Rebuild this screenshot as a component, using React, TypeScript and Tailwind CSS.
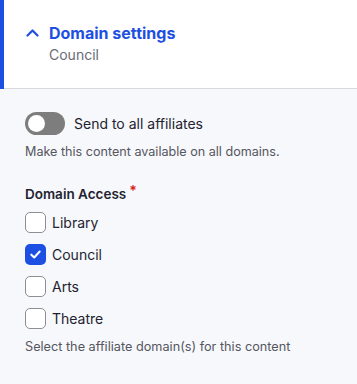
import React, { useState } from "react";

const domains = ["Library", "Council", "Arts", "Theatre"];

export default function App() {
  const [checked, setChecked] = useState<string[]>(["Council"]);
  const [sendAll, setSendAll] = useState(false);

  const toggle = (d: string) =>
    setChecked((c) => (c.includes(d) ? c.filter((x) => x !== d) : [...c, d]));

  return (
    <div className="w-[357px] h-[384px] bg-[#f7f8fb] font-['Inter',sans-serif] text-[#222330] antialiased overflow-hidden">
      {/* Details summary */}
      <div className="h-[89px] bg-white border-l-4 border-[#1d50e2] flex">
        <div className="flex-1 border-b border-[#d8d9de] pl-[22px] pt-[22px] flex gap-[10px]">
          <svg className="mt-[6px] w-[13px] h-[9px] shrink-0" viewBox="0 0 13 9" fill="none">
            <path d="M1.5 7.5 L6.5 2.5 L11.5 7.5" stroke="#1d50e2" strokeWidth="2.2" strokeLinecap="round" strokeLinejoin="round" />
          </svg>
          <div>
            <div className="text-[16px] leading-[22px] font-bold text-[#1d50e2]">Domain settings</div>
            <div className="text-[14px] leading-[20px] text-[#6b6b76] mt-[1px]">Council</div>
          </div>
        </div>
      </div>

      {/* Body */}
      <div className="px-[25px] pt-[23px]">
        <label className="flex items-center gap-[9px] cursor-pointer">
          <button
            onClick={() => setSendAll(!sendAll)}
            className={`w-[40px] h-[23px] rounded-full p-[3px] flex ${sendAll ? "bg-[#1d50e2] justify-end" : "bg-[#7d7d7d] justify-start"}`}
          >
            <span className="w-[17px] h-[17px] rounded-full bg-white block" />
          </button>
          <span className="text-[14px] leading-[20px]">Send to all affiliates</span>
        </label>
        <p className="text-[12.6px] leading-[16px] text-[#55565f] mt-[9px]">Make this content available on all domains.</p>

        <div className="mt-[25px] text-[13.5px] leading-[18px] font-semibold flex">
          Domain Access<span className="text-[#d72222] ml-[3px] -mt-[3px] text-[14px]">*</span>
        </div>

        <div className="mt-[9px] flex flex-col gap-[11px]">
          {domains.map((d) => {
            const on = checked.includes(d);
            return (
              <label key={d} className="flex items-center gap-[6px] cursor-pointer" onClick={() => toggle(d)}>
                <span
                  className={`w-[21px] h-[21px] rounded-[5px] flex items-center justify-center ${on ? "bg-[#1d50e2]" : "bg-white border border-[#8e8f96]"}`}
                >
                  {on && (
                    <svg viewBox="0 0 14 14" className="w-[13px] h-[13px]" fill="none">
                      <path d="M2.5 7.2 L5.6 10.2 L11.5 3.8" stroke="white" strokeWidth="2.2" strokeLinecap="round" strokeLinejoin="round" />
                    </svg>
                  )}
                </span>
                <span className="text-[14px] leading-[20px]">{d}</span>
              </label>
            );
          })}
        </div>

        <p className="text-[12.7px] leading-[16px] text-[#55565f] mt-[10px]">Select the affiliate domain(s) for this content</p>
      </div>
    </div>
  );
}
